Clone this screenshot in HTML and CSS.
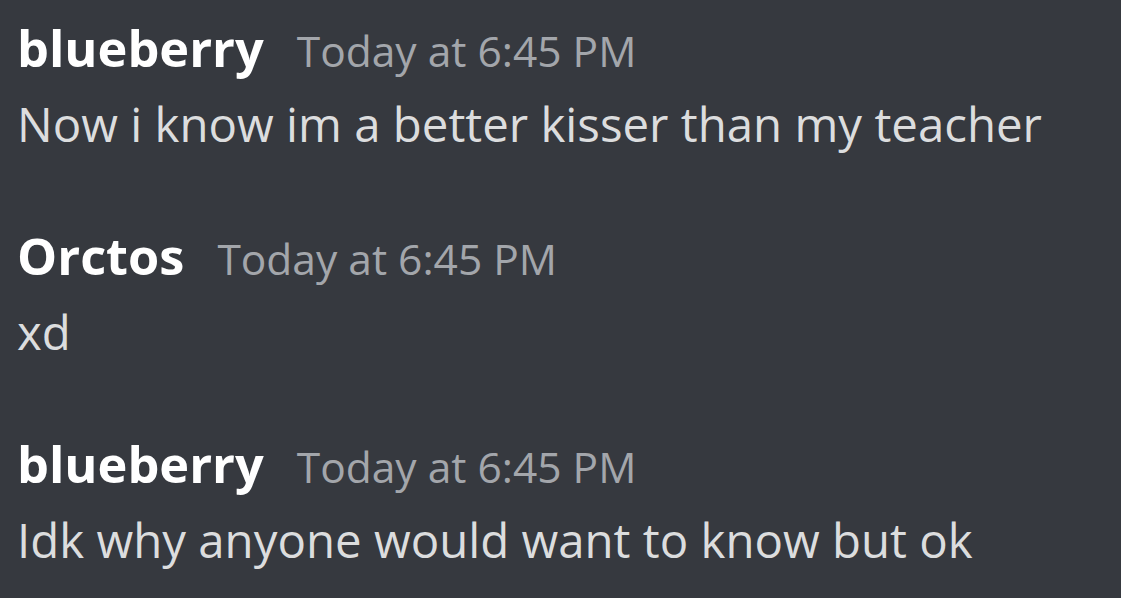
FILE: index.html
```html
<!DOCTYPE html>
<html>
<head>
<meta charset="utf-8">
<link rel="stylesheet" href="styles.css">
</head>
<body>
<div class="chat">
  <div class="msg">
    <div class="header"><span class="name">blueberry</span><span class="time">Today at 6:45 PM</span></div>
    <div class="text">Now i know im a better kisser than my teacher</div>
  </div>
  <div class="msg">
    <div class="header"><span class="name">Orctos</span><span class="time">Today at 6:45 PM</span></div>
    <div class="text">xd</div>
  </div>
  <div class="msg">
    <div class="header"><span class="name">blueberry</span><span class="time">Today at 6:45 PM</span></div>
    <div class="text">Idk why anyone would want to know but ok</div>
  </div>
</div>
</body>
</html>
```
FILE: styles.css
```css
html, body {
  margin: 0;
  padding: 0;
  background: #36393f;
  height: 100%;
}
body {
  font-family: "Open Sans", "Noto Sans", sans-serif;
}
.chat {
  display: flex;
  flex-direction: column;
  gap: 60px;
  padding: 12px 0 0 17px;
}
.header {
  display: flex;
  align-items: baseline;
  gap: 33px;
  height: 72px;
  line-height: 72px;
}
.name {
  color: #ffffff;
  font-weight: 700;
  font-size: 50.5px;
}
.time {
  color: #a3a6ab;
  font-size: 42.5px;
}
.text {
  margin-top: 4px;
  color: #dcddde;
  font-size: 47.4px;
  line-height: 72px;
}
```
